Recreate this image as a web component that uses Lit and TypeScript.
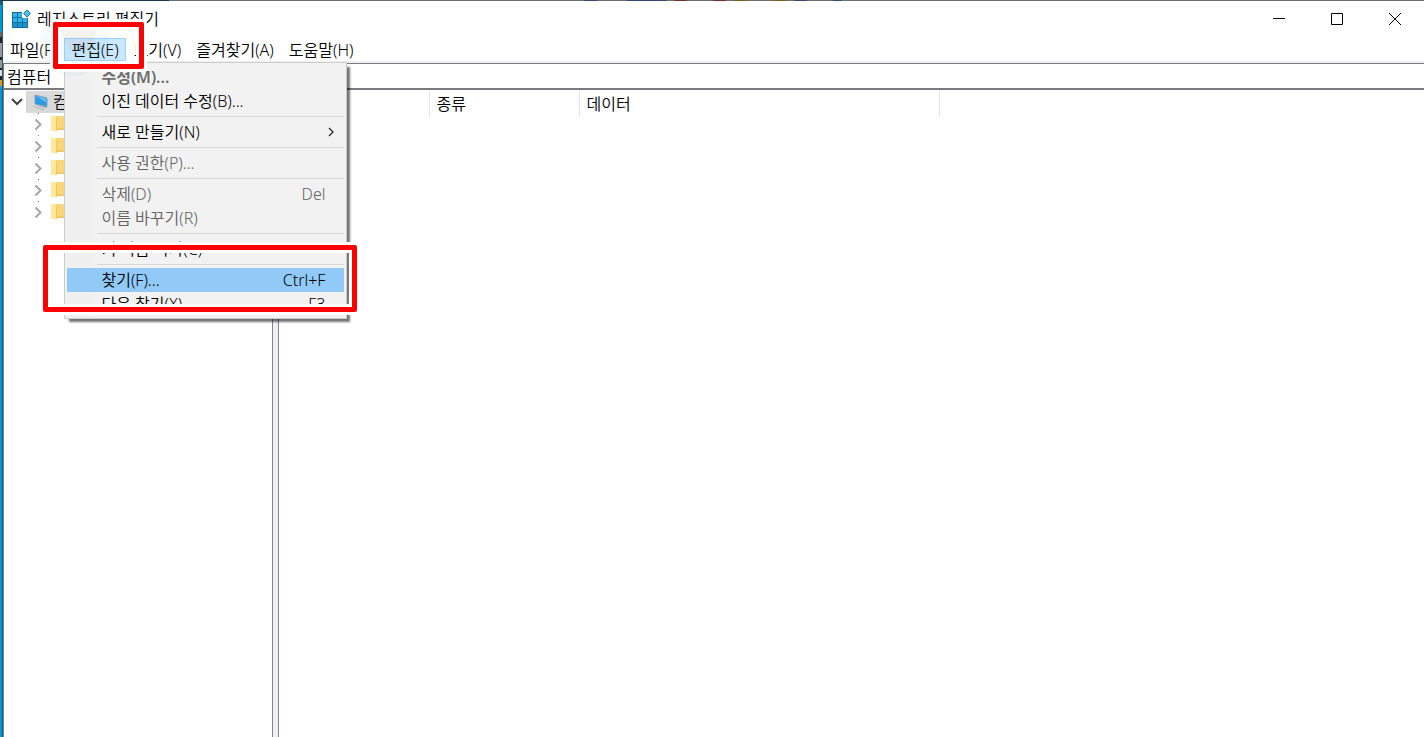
import { LitElement, html, css, svg, nothing } from "lit";
import { customElement, property } from "lit/decorators.js";

interface Entry {
  label?: string;
  key?: string;
  state?: string;
  sub?: boolean;
}

const EDIT_MENU: Entry[] = [
  { label: "수정(M)...", state: "off strong" },
  { label: "이진 데이터 수정(B)..." },
  {},
  { label: "새로 만들기(N)", sub: true },
  {},
  { label: "사용 권한(P)...", state: "off" },
  {},
  { label: "삭제(D)", key: "Del", state: "off" },
  { label: "이름 바꾸기(R)", state: "off" },
  {},
  { label: "키 이름 복사(C)" },
  {},
  { label: "찾기(F)...", key: "Ctrl+F", state: "hot" },
  { label: "다음 찾기(X)", key: "F3" },
];

@customElement("edit-menu")
export class EditMenu extends LitElement {
  @property({ attribute: false }) entries: Entry[] = [];

  static styles = css`
    .menu {
      box-sizing: border-box;
      width: 283px;
      padding: 2px;
      border: 1px solid #ccc;
      background: linear-gradient(90deg, #f0f0f0 30px, #f2f2f2 30px);
      box-shadow: 4px 4px 2px -1px rgba(0, 0, 0, 0.55);
    }
    .entry {
      display: flex;
      align-items: center;
      box-sizing: border-box;
      width: 100%;
      height: 24px;
      padding: 0 19px 0 34px;
      border: 0;
      background: none;
      font: inherit;
      color: #000;
      white-space: nowrap;
    }
    .label {
      flex: 1;
      text-align: left;
    }
    .off {
      color: #626262;
    }
    .strong {
      font-weight: 600;
      color: #6d6d6d;
    }
    .hot {
      background: #91c9f7;
    }
    .sub {
      padding-right: 9px;
    }
    .rule {
      height: 1px;
      margin: 3px 0 3px 30px;
      border: 0;
      background: #d7d7d7;
    }
  `;

  render() {
    return html`<div class="menu" role="menu">
      ${this.entries.map((e) =>
        e.label
          ? html`<button
              class="entry ${e.state ?? ""} ${e.sub ? "sub" : ""}"
              role="menuitem"
              ?disabled=${(e.state ?? "").includes("off")}
            >
              <span class="label">${e.label}</span>
              ${e.key ? html`<span>${e.key}</span>` : nothing}
              ${e.sub
                ? html`<svg width="8" height="10" viewBox="0 0 8 10" aria-hidden="true">
                    <path d="M2 1l4 4-4 4" fill="none" stroke="#222" stroke-width="1.2" />
                  </svg>`
                : nothing}
            </button>`
          : html`<hr class="rule" />`
      )}
    </div>`;
  }
}

const folder = svg`
  <path d="M0 1h4l2 1v14H0z" fill="#ffe9a4"/>
  <path d="M5 1h9v12H5z" fill="#f9d778"/>
  <path d="M5 13h9v2H5z" fill="#f3c860"/>
  <path d="M0 1l5 2v14l-5-2z" fill="#ffe79b"/>
  <path d="M5.500 3v13" stroke="#efc662"/>`;

@customElement("app-root")
export class AppRoot extends LitElement {
  static styles = css`
    :host {
      display: flex;
      flex-direction: column;
      box-sizing: border-box;
      min-height: 100vh;
      padding: 1px 0 0 3px;
      position: relative;
      overflow: hidden;
      font: 350 16px/22px "Noto Sans", "Noto Sans CJK KR", sans-serif;
      color: #000;
      background:
        linear-gradient(90deg, #15364d 169px, #6f6f6f 169px 584px, #33477a 584px 597px, #6f6f6f 597px 627px,
          #33477a 627px 667px, #6f6f6f 667px 674px, #7a2f2f 674px 687px, #6f6f6f 687px 713px, #7a2f2f 713px 726px,
          #6f6f6f 726px 734px, #7d6018 734px 747px, #6f6f6f 747px 773px, #7d6018 773px 786px, #6f6f6f 786px 795px,
          #33477a 795px 807px, #6f6f6f 807px 833px, #33477a 833px 842px, #6f6f6f 842px) 0 0 / 100% 1px no-repeat,
        linear-gradient(90deg, transparent 2px, #1c5a78 2px),
        linear-gradient(#1c5a78 5px, #0099d8 5px 32px, #666 32px 37px, #222 37px 43px, #999 43px 57px, #222 57px 60px,
          #999 60px 68px, #222 68px 70px, #ddd 70px 76px, #222 76px 80px, #d89a20 80px 86px, #0099d8 86px);
    }
    .window {
      flex: 1;
      display: flex;
      flex-direction: column;
      background: #fff;
    }
    .title {
      display: flex;
      align-items: flex-start;
      height: 37px;
      padding-left: 8px;
    }
    .logo {
      margin-top: 8px;
    }
    .title h1 {
      flex: 1;
      margin: 7px 0 0 6px;
      font: inherit;
    }
    .caption {
      width: 58px;
      height: 36px;
      padding: 0;
      border: 0;
      background: none;
    }
    .caption svg {
      display: block;
      margin: auto;
    }
    .bar {
      display: flex;
      gap: 1px;
      height: 23px;
      border-bottom: 2px solid #f0f0f0;
    }
    .item {
      position: relative;
    }
    .top {
      height: 23px;
      padding: 0 7px;
      border: 0;
      background: none;
      font: inherit;
      color: inherit;
      white-space: nowrap;
    }
    .open {
      background: #cce8ff;
      box-shadow: inset 0 0 0 1px #99d1ff;
    }
    .drop {
      position: absolute;
      z-index: 1;
      top: 24px;
      left: 0;
    }
    .address {
      height: 23px;
      padding: 0 3px 1px;
      border: 1px solid #7a7a80;
      border-width: 1px 0 2px 1px;
      font: inherit;
      color: inherit;
      outline: 0;
      background: #fff;
    }
    .body {
      flex: 1;
      display: flex;
    }
    .tree {
      box-sizing: border-box;
      width: 269px;
      padding-top: 1px;
      border-left: 1px solid #828790;
    }
    .node {
      display: flex;
      align-items: center;
      height: 22px;
    }
    .root {
      padding-left: 7px;
    }
    .pick {
      display: flex;
      align-items: center;
      gap: 3px;
      height: 22px;
      margin-left: 3px;
      padding: 0 3px 0 7px;
      background: #d9d9d9;
    }
    .child {
      gap: 8px;
      padding-left: 30px;
    }
    .split {
      box-sizing: border-box;
      width: 7px;
      border: 1px solid #828790;
      border-width: 0 1px;
      background: #f0f0f0;
    }
    .list {
      flex: 1;
    }
    table {
      border-collapse: collapse;
      table-layout: fixed;
      width: 661px;
    }
    th {
      box-sizing: border-box;
      height: 27px;
      padding: 0 7px;
      border-right: 1px solid #e5e5e5;
      font-weight: inherit;
      text-align: left;
    }
    .short {
      width: 150px;
    }
    .stamp {
      position: absolute;
      z-index: 2;
      left: 38px;
      top: 6px;
      pointer-events: none;
    }
    .mark {
      position: absolute;
      z-index: 3;
      box-sizing: border-box;
      border: 5px solid #f00;
      border-radius: 2px;
      box-shadow: 0 0 0 3px #fff, inset 0 0 0 3px #fff;
      pointer-events: none;
    }
    .mark-edit {
      left: 53px;
      top: 22px;
      width: 91px;
      height: 47px;
    }
    .mark-find {
      left: 43px;
      top: 245px;
      width: 314px;
      height: 67px;
    }
  `;

  private top(label: string) {
    return html`<div class="item"><button class="top">${label}</button></div>`;
  }

  render() {
    return html`
      <div class="window">
        <header class="title">
          <svg class="logo" width="20" height="20" viewBox="0 0 20 20" aria-hidden="true">
            <path d="M1 3h10v6h6v10H1z" fill="#0b6fa4" />
            <path d="M2 4h4v4H2zM7 4h4v4H7zM2 9h4v4H2zM7 9h4v4H7zM12 9h4v4h-4z" fill="#35b2e6" />
            <path d="M2 14h4v4H2zM7 14h4v4H7zM12 14h4v4h-4z" fill="#1d92cb" />
            <path d="M16 1l3.500 3.500L16 8l-3.500-3.500z" fill="#56b9e6" stroke="#1879ab" />
          </svg>
          <h1>레지스트리 편집기</h1>
          <button class="caption" aria-label="최소화">
            <svg width="12" height="12"><path d="M0 5.500h12" stroke="#000" /></svg>
          </button>
          <button class="caption" aria-label="최대화">
            <svg width="12" height="12"><path d="M.5.500h11v11H.5z" fill="none" stroke="#000" /></svg>
          </button>
          <button class="caption" aria-label="닫기">
            <svg width="12" height="12"><path d="M0 0l12 12M12 0L0 12" stroke="#000" /></svg>
          </button>
        </header>
        <nav class="bar">
          ${this.top("파일(F)")}
          <div class="item">
            <button class="top open" aria-expanded="true">편집(E)</button>
            <edit-menu class="drop" .entries=${EDIT_MENU}></edit-menu>
          </div>
          ${this.top("보기(V)")} ${this.top("즐겨찾기(A)")} ${this.top("도움말(H)")}
        </nav>
        <input class="address" aria-label="주소" .value=${"컴퓨터"} />
        <main class="body">
          <section class="tree">
            <div class="node root">
              <svg width="12" height="8" viewBox="0 0 12 8" aria-hidden="true">
                <path d="M1 1l5 5 5-5" fill="none" stroke="#404040" stroke-width="2" />
              </svg>
              <span class="pick">
                <svg width="17" height="18" viewBox="0 0 17 18" aria-hidden="true">
                  <path d="M2 2l12 3v9L2 11z" fill="#2b9be8" stroke="#8fa3b3" />
                  <path d="M3 3l10 2.500v4z" fill="#5fc0fb" />
                  <path d="M0 13l11 4M4 12l9 3" stroke="#aab4bc" />
                </svg>
                컴퓨터
              </span>
            </div>
            ${[0, 1, 2, 3, 4].map(
              () => html`<div class="node child">
                <svg width="9" height="22" viewBox="0 0 9 22" aria-hidden="true">
                  <path d="M1.500 6.500l5 5-5 5" fill="none" stroke="#a6a6a6" stroke-width="2" />
                  <path d="M4 .5h1" stroke="#777" />
                </svg>
                <svg width="16" height="18" viewBox="0 0 16 18" aria-hidden="true">${folder}</svg>
              </div>`
            )}
          </section>
          <div class="split"></div>
          <section class="list">
            <table>
              <thead>
                <tr>
                  <th class="short">이름</th>
                  <th class="short">종류</th>
                  <th>데이터</th>
                </tr>
              </thead>
            </table>
          </section>
        </main>
      </div>
      <svg class="stamp" width="72" height="72" viewBox="0 0 72 72" aria-hidden="true">
        <circle cx="36" cy="36" r="34" fill="#3fb8a0" opacity="0.05" />
        <path d="M24 6l8 4h16l8-4 3 16-6 22H30l-8-22z" fill="#e06040" opacity="0.06" />
      </svg>
      <div class="mark mark-edit"></div>
      <div class="mark mark-find"></div>
    `;
  }
}
